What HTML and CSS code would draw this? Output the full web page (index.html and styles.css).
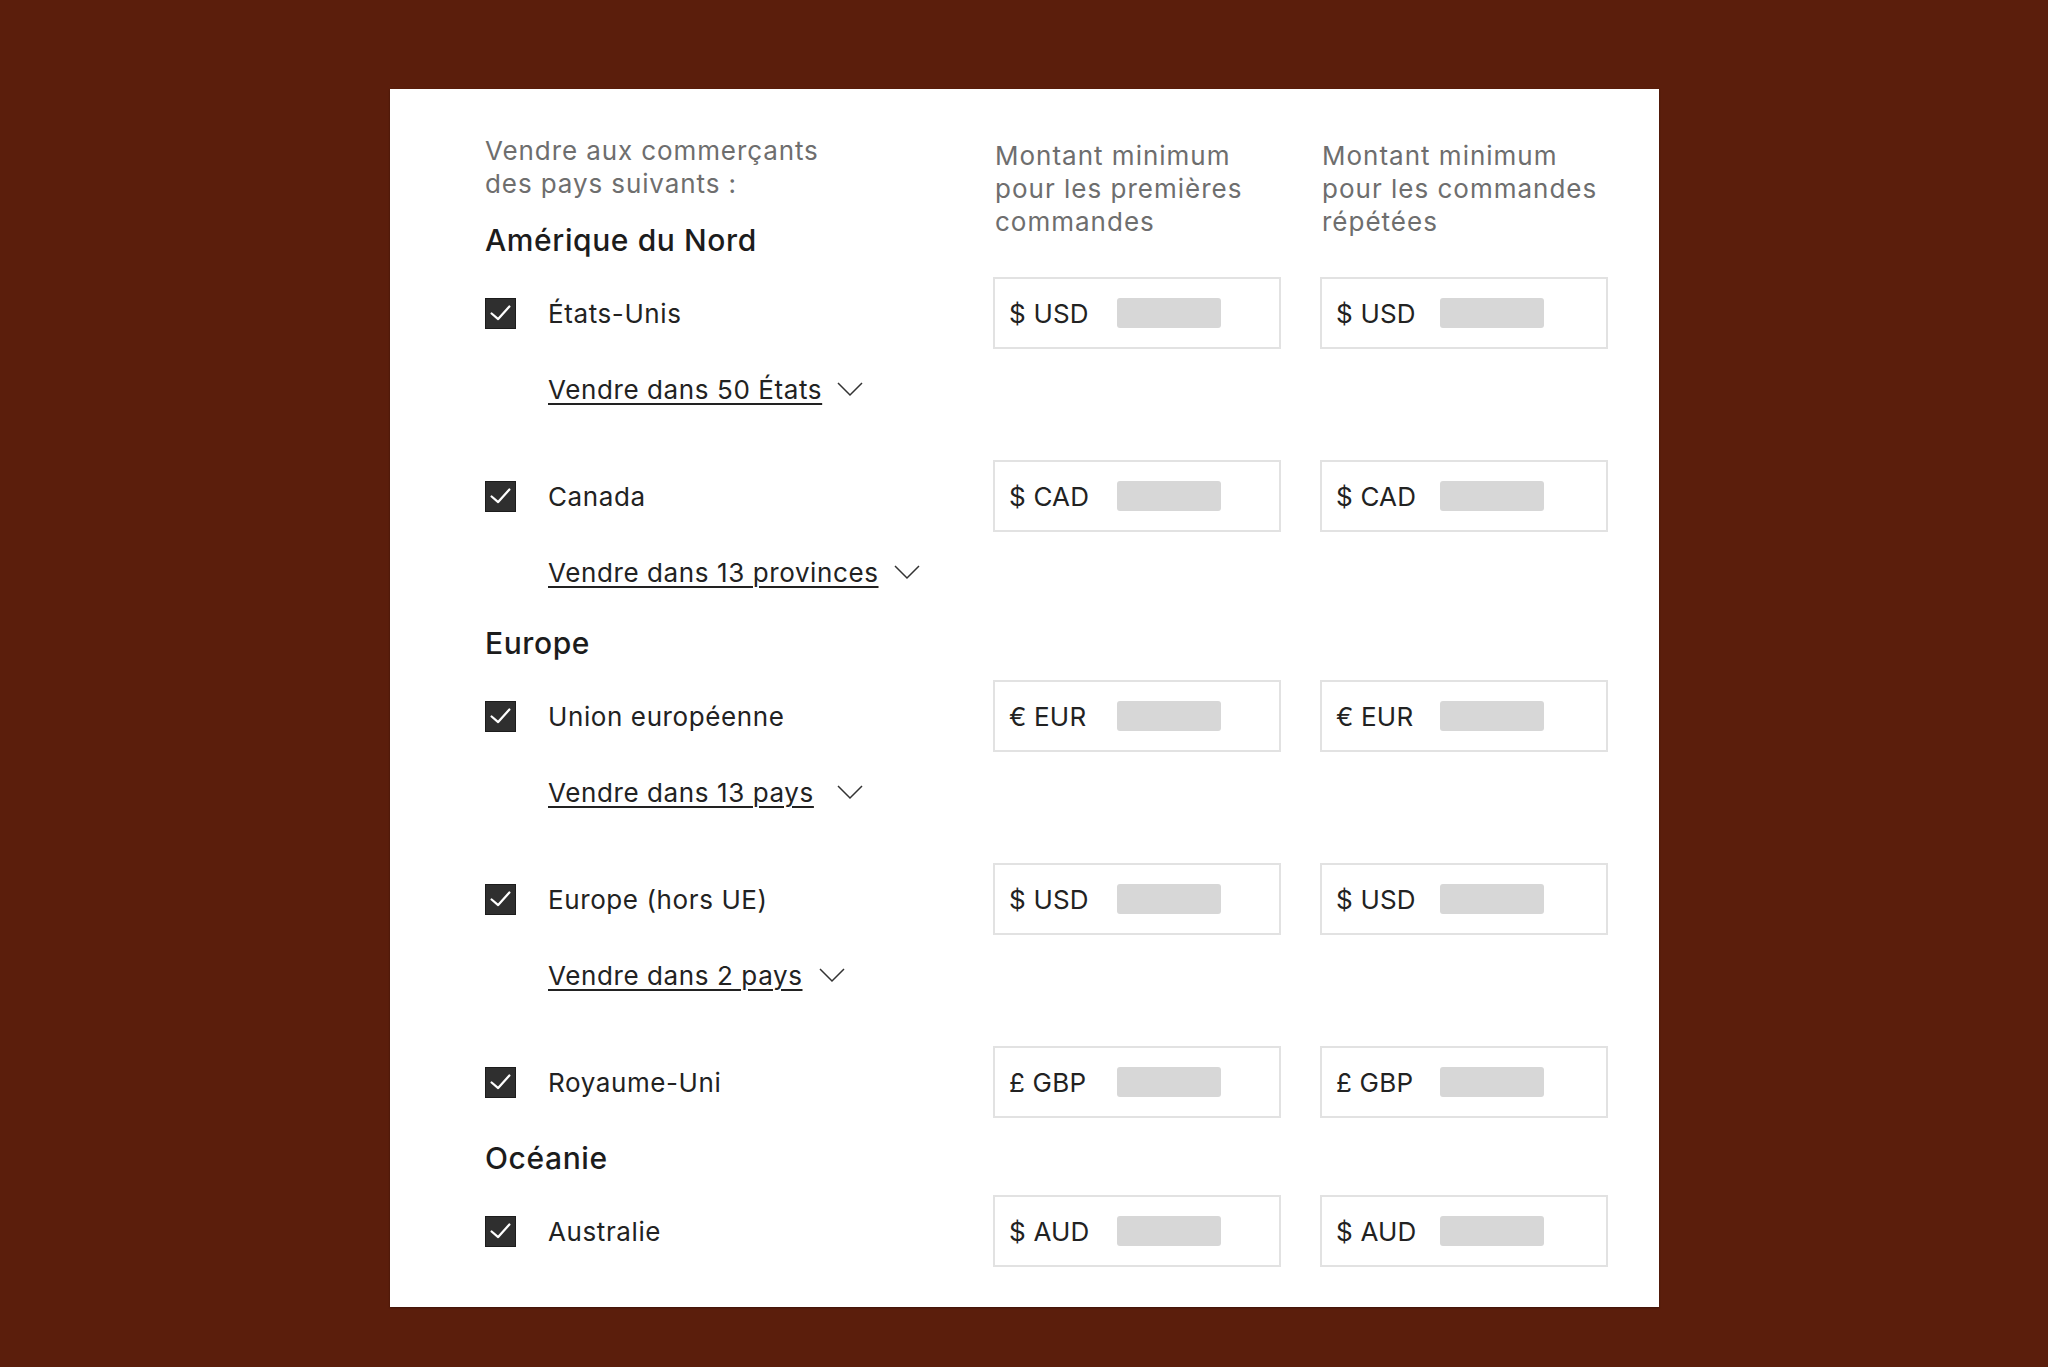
FILE: index.html
```html
<!DOCTYPE html>
<html lang="fr">
<head>
<meta charset="utf-8">
<title>Vendre aux commerçants</title>
<link rel="stylesheet" href="styles.css">
</head>
<body>
<div class="card">
  <div class="head">
    <div class="head-left">
      <p class="intro">Vendre aux commerçants<br>des pays suivants :</p>
      <h2 class="region first">Amérique du Nord</h2>
    </div>
    <p class="colhead">Montant minimum<br>pour les premières<br>commandes</p>
    <p class="colhead">Montant minimum<br>pour les commandes<br>répétées</p>
  </div>

  <div class="row">
    <label class="country"><span class="cb"><svg viewBox="0 0 31 31"><path d="M6 15.5 L13 21.5 L25 8"/></svg></span>États-Unis</label>
    <div class="field"><span class="cur">$ USD</span><span class="ph"></span></div>
    <div class="field"><span class="cur">$ USD</span><span class="ph"></span></div>
  </div>
  <div class="sub"><a href="#">Vendre dans 50 États</a><svg class="chev" viewBox="0 0 26 15"><path d="M1 1 L13 13 L25 1"/></svg></div>

  <div class="row">
    <label class="country"><span class="cb"><svg viewBox="0 0 31 31"><path d="M6 15.5 L13 21.5 L25 8"/></svg></span>Canada</label>
    <div class="field"><span class="cur">$ CAD</span><span class="ph"></span></div>
    <div class="field"><span class="cur">$ CAD</span><span class="ph"></span></div>
  </div>
  <div class="sub"><a href="#">Vendre dans 13 provinces</a><svg class="chev" viewBox="0 0 26 15"><path d="M1 1 L13 13 L25 1"/></svg></div>

  <h2 class="region">Europe</h2>

  <div class="row">
    <label class="country"><span class="cb"><svg viewBox="0 0 31 31"><path d="M6 15.5 L13 21.5 L25 8"/></svg></span>Union européenne</label>
    <div class="field"><span class="cur">€ EUR</span><span class="ph"></span></div>
    <div class="field"><span class="cur">€ EUR</span><span class="ph"></span></div>
  </div>
  <div class="sub"><a href="#">Vendre dans 13 pays</a><svg class="chev wide" viewBox="0 0 26 15"><path d="M1 1 L13 13 L25 1"/></svg></div>

  <div class="row">
    <label class="country"><span class="cb"><svg viewBox="0 0 31 31"><path d="M6 15.5 L13 21.5 L25 8"/></svg></span>Europe (hors UE)</label>
    <div class="field"><span class="cur">$ USD</span><span class="ph"></span></div>
    <div class="field"><span class="cur">$ USD</span><span class="ph"></span></div>
  </div>
  <div class="sub"><a href="#">Vendre dans 2 pays</a><svg class="chev mid" viewBox="0 0 26 15"><path d="M1 1 L13 13 L25 1"/></svg></div>

  <div class="row">
    <label class="country"><span class="cb"><svg viewBox="0 0 31 31"><path d="M6 15.5 L13 21.5 L25 8"/></svg></span>Royaume-Uni</label>
    <div class="field"><span class="cur">£ GBP</span><span class="ph"></span></div>
    <div class="field"><span class="cur">£ GBP</span><span class="ph"></span></div>
  </div>

  <h2 class="region">Océanie</h2>

  <div class="row">
    <label class="country"><span class="cb"><svg viewBox="0 0 31 31"><path d="M6 15.5 L13 21.5 L25 8"/></svg></span>Australie</label>
    <div class="field"><span class="cur">$ AUD</span><span class="ph"></span></div>
    <div class="field"><span class="cur">$ AUD</span><span class="ph"></span></div>
  </div>
</div>
</body>
</html>
```
FILE: styles.css
```css
* { box-sizing: border-box; }
html, body { margin: 0; padding: 0; }
body {
  background: #5b1e0c;
  width: 2048px;
  height: 1367px;
  font-family: "Inter", "Liberation Sans", sans-serif;
  color: #222;
  padding-top: 89px;
  padding-left: 390px;
}
.card {
  width: 1269px;
  height: 1218px;
  background: #fff;
  padding: 46px 51px 0 95px;
  box-shadow: 0 1px 2px rgba(0,0,0,0.35);
}
.head, .row {
  display: grid;
  grid-template-columns: 469px 288px 288px;
  column-gap: 39px;
}
.intro, .colhead {
  margin: 0;
  font-size: 26px;
  line-height: 33px;
  letter-spacing: 0.9px;
  color: #6e6e6e;
  font-weight: 400;
}
.intro { margin-top: -1px; }
.colhead { margin-top: 4px; padding-left: 2px; letter-spacing: 1px; }
.region {
  margin: 34px 0 0;
  font-size: 30px;
  line-height: 40px;
  letter-spacing: 0.6px;
  font-weight: 500;
  color: #1c1c1c;
}
.region.first { margin-top: 20px; }
.row + .region { margin-top: 20px; }
.row {
  height: 72px;
  margin-top: 17px;
  align-items: center;
}
.sub + .row { margin-top: 54px; }
.country {
  display: flex;
  align-items: center;
  font-size: 26px;
  letter-spacing: 0.6px;
  color: #222;
}
.cb {
  width: 31px;
  height: 31px;
  background: #2f2f2f;
  border: 1px solid #1c1c1c;
  margin-right: 32px;
  display: flex;
}
.cb svg { width: 29px; height: 29px; }
.cb path { fill: none; stroke: #fff; stroke-width: 2.4; stroke-linecap: round; stroke-linejoin: round; }
.field {
  height: 72px;
  border: 2px solid #e2e2e2;
  display: flex;
  align-items: center;
  padding-left: 14px;
}
.cur {
  width: 108px;
  font-size: 26px;
  letter-spacing: 0.2px;
  color: #222;
}
.field + .field .cur { width: 104px; }
.ph {
  width: 104px;
  height: 30px;
  background: #d7d7d7;
  border-radius: 3px;
}
.sub {
  margin-top: 24px;
  padding-left: 63px;
  display: flex;
  align-items: center;
  height: 33px;
}
.sub a {
  font-size: 26px;
  line-height: 33px;
  letter-spacing: 0.6px;
  color: #222;
  text-decoration: underline;
  text-decoration-thickness: 1.5px;
  text-underline-offset: 4px;
}
.chev {
  width: 26px;
  height: 15px;
  margin-left: 15px;
}
.chev.wide { margin-left: 23px; }
.chev.mid { margin-left: 16px; }
.chev path { fill: none; stroke: #333; stroke-width: 1.5; }
```
